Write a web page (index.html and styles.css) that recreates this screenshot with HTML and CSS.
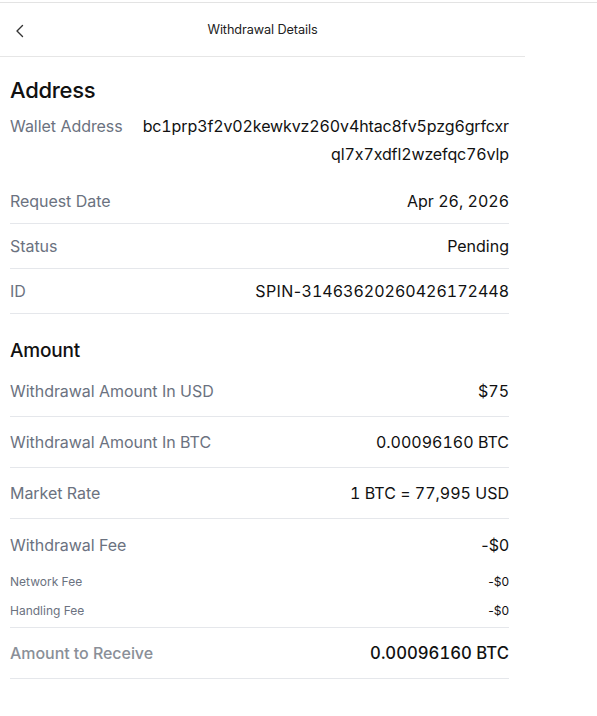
FILE: index.html
```html
<!DOCTYPE html>
<html lang="en">
<head>
    <meta charset="UTF-8">
    <meta name="viewport" content="width=device-width, initial-scale=1.0">
    <title>Withdrawal Details</title>
    <link rel="stylesheet" href="styles.css">
</head>
<body>
    <div class="topbar"></div>
    <div class="app">
        <div class="header">
            <button class="back" aria-label="Back">
                <svg width="10" height="14" viewBox="0 0 10 14"><polyline points="7.5,1.5 2,7 7.5,12.5" fill="none" stroke="#333" stroke-width="1.4" stroke-linecap="round" stroke-linejoin="round"/></svg>
            </button>
            <div class="title">Withdrawal Details</div>
        </div>

        <div class="content">
            <h2 class="section-title">Address</h2>
            <div class="row wallet">
                <span class="label">Wallet Address</span>
                <span class="value">bc1prp3f2v02kewkvz260v4htac8fv5pzg6grfcxr ql7x7xdfl2wzefqc76vlp</span>
            </div>
            <div class="row line">
                <span class="label">Request Date</span>
                <span class="value">Apr 26, 2026</span>
            </div>
            <div class="row line">
                <span class="label">Status</span>
                <span class="value">Pending</span>
            </div>
            <div class="row line">
                <span class="label">ID</span>
                <span class="value"><span class="plain">SPIN-</span>31463620260426172448</span>
            </div>

            <h3 class="section-title small">Amount</h3>
            <div class="row tall line">
                <span class="label">Withdrawal Amount In USD</span>
                <span class="value">$75</span>
            </div>
            <div class="row tall line">
                <span class="label">Withdrawal Amount In BTC</span>
                <span class="value">0.00096160 BTC</span>
            </div>
            <div class="row tall line">
                <span class="label">Market Rate</span>
                <span class="value">1 BTC = 77,995 USD</span>
            </div>
            <div class="fees line">
                <div class="fee-main">
                    <span class="label">Withdrawal Fee</span>
                    <span class="value">-$0</span>
                </div>
                <div class="fee-sub">
                    <span class="label">Network Fee</span>
                    <span class="value">-$0</span>
                </div>
                <div class="fee-sub">
                    <span class="label">Handling Fee</span>
                    <span class="value">-$0</span>
                </div>
            </div>
            <div class="row tall line receive">
                <span class="label">Amount to Receive</span>
                <span class="value">0.00096160 BTC</span>
            </div>
        </div>
    </div>
</body>
</html>
```

FILE: styles.css
```css
body { margin: 0; background: #fff; color: #111; font-family: Inter, "Noto Sans", sans-serif; }
.topbar { height: 2px; border-bottom: 1px solid #e3e3e3; }
.app { width: 525px; }
.header { position: relative; height: 53px; border-bottom: 1px solid #e6e6e6; display: flex; align-items: center; justify-content: center; }
.back { position: absolute; left: 13px; top: 20px; background: none; border: none; padding: 0; width: 14px; height: 16px; display: flex; align-items: center; justify-content: center; }
.title { font-size: 12.7px; color: #222; letter-spacing: -0.1px; }
.content { padding: 0 16px 0 10px; }
.section-title { margin: 19px 0 0; font-size: 22px; font-weight: 500; line-height: 28px; color: #111; letter-spacing: -0.3px; }
.section-title.small { margin-top: 22px; font-size: 19px; line-height: 30px; letter-spacing: -0.2px; }
.row { display: flex; justify-content: space-between; align-items: flex-start; padding: 8px 0; font-size: 16px; line-height: 28px; }
.row.wallet { padding-bottom: 11px; }
.row.wallet .value { text-align: right; width: 372px; letter-spacing: -0.12px; }
.row.tall { padding: 11px 0; }
.line { border-bottom: 1px solid #e5e7eb; }
.label { color: #6b7280; white-space: nowrap; letter-spacing: -0.05px; }
.value { color: #111; text-align: right; font-variant-numeric: tabular-nums; font-variant-ligatures: no-contextual; }
.value .plain { font-variant-numeric: normal; letter-spacing: 0.4px; }
.fees { padding: 12px 0 2px; }
.fees .value { font-variant-numeric: normal; }
.fee-main { display: flex; justify-content: space-between; font-size: 16px; line-height: 28px; margin-bottom: 8px; }
.fee-sub { display: flex; justify-content: space-between; font-size: 12px; line-height: 29px; }
.fee-sub .label { letter-spacing: 0; }
.receive .label { color: #8a8f98; font-weight: 500; }
.receive .value { font-weight: 500; font-size: 16.7px; }
```
